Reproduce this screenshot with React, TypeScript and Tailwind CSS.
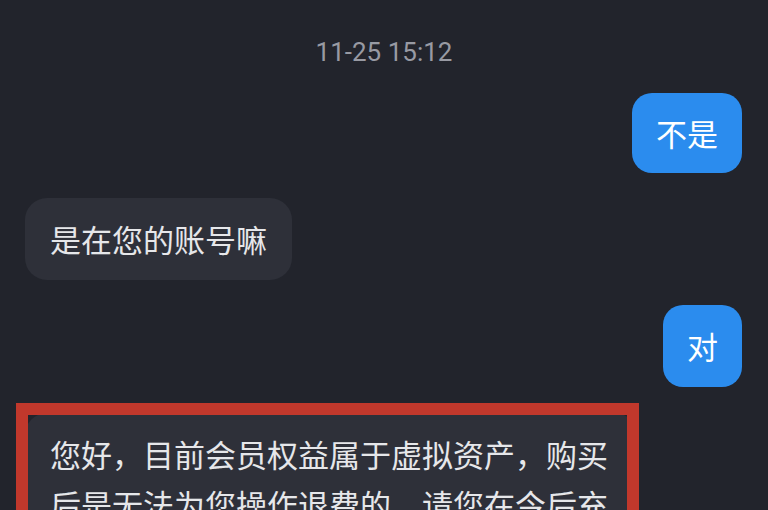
import React from "react";

const cjk = { fontFamily: '"Noto Sans CJK SC", "Noto Sans", sans-serif' };

export default function App() {
  return (
    <div
      className="w-full h-[510px] overflow-hidden bg-[#22242c] flex flex-col"
      style={cjk}
    >
      <div
        className="pt-[36px] text-center text-[26px] leading-[32px] text-[#989aa3]"
        style={{ fontFamily: 'Roboto, "Noto Sans", sans-serif' }}
      >
        11-25 15:12
      </div>

      <div className="flex flex-col gap-[25px] mt-[25px] px-[26px]">
        <div className="flex justify-end">
          <div className="bg-[#2b8cee] text-white text-[31px] leading-[48px] px-[24px] py-[16px] rounded-[20px]">
            不是
          </div>
        </div>

        <div className="flex justify-start -ml-px">
          <div className="bg-[#2e3039] text-[#e6e7ea] text-[31px] leading-[50px] px-[25px] py-[16px] rounded-[22px]">
            是在您的账号嘛
          </div>
        </div>

        <div className="flex justify-end">
          <div className="bg-[#2b8cee] text-white text-[31px] leading-[50px] px-[24px] py-[16px] rounded-[20px]">
            对
          </div>
        </div>

        <div className="flex justify-start -ml-px mt-px">
          <div className="relative w-[612px] bg-[#2e3039] text-[#e6e7ea] text-[31px] leading-[50px] px-[25px] py-[16px] rounded-[22px] break-all">
            您好，目前会员权益属于虚拟资产，购买后是无法为您操作退费的，请您在今后充值时谨慎考虑哦，感谢您的理解与支持
            <div className="absolute -left-[9px] -top-[10px] -right-[2px] -bottom-[10px] border-[12px] border-[#c1382c]" />
          </div>
        </div>
      </div>
    </div>
  );
}
